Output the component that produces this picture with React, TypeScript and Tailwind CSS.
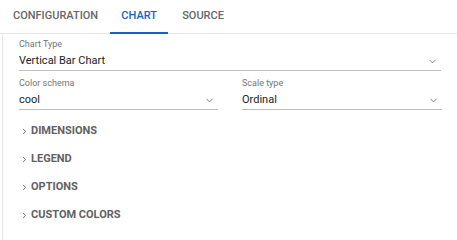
import { ChevronDown, ChevronRight } from "lucide-react"

const FONT = { fontFamily: "Roboto, 'Liberation Sans', sans-serif" }

function SelectField({ label, value, className }: { label: string; value: string; className?: string }) {
  return (
    <div className={className}>
      <div className="text-[9px] leading-[11px] text-[#757575]">{label}</div>
      <div className="flex items-center justify-between h-[21px] pt-[3px] border-b border-[#bdbdbd]">
        <span className="text-[11px] text-[#212121]">{value}</span>
        <ChevronDown className="w-[11px] h-[11px] text-[#777] mr-[3px]" strokeWidth={2} />
      </div>
    </div>
  )
}

const sections = ["DIMENSIONS", "LEGEND", "OPTIONS", "CUSTOM COLORS"]

export default function App() {
  return (
    <div className="w-[457px] h-[240px] bg-white overflow-hidden" style={FONT}>
      {/* Tabs */}
      <div className="flex h-[34px] border-b border-[#e6e6e6] pl-[2px]">
        <div className="px-[11px] flex items-center text-[11px] font-medium text-[#666]">CONFIGURATION</div>
        <div className="ml-[1px] w-[58px] flex items-center justify-center text-[11px] font-medium text-[#1565c0] border-b-2 border-[#1565c0] mb-[-1px]">
          CHART
        </div>
        <div className="ml-[14px] flex items-center text-[11px] font-medium text-[#666]">SOURCE</div>
      </div>

      <div className="ml-[2px] border-l border-[#e6e6e6] h-[206px] pl-[16px] pr-[15px] pt-[5px]">
        <SelectField label="Chart Type" value="Vertical Bar Chart" className="w-[422px]" />
        <div className="flex gap-[24px] mt-[7px]">
          <SelectField label="Color schema" value="cool" className="w-[199px]" />
          <SelectField label="Scale type" value="Ordinal" className="w-[200px]" />
        </div>

        <div className="mt-[13px] flex flex-col gap-[12px]">
          {sections.map((s) => (
            <div key={s} className="flex items-center h-[16px]">
              <ChevronRight className="w-[9px] h-[9px] text-[#666] ml-[1px] mr-[2px]" strokeWidth={2.5} />
              <span className="text-[11px] font-bold text-[#616161]">{s}</span>
            </div>
          ))}
        </div>
      </div>
    </div>
  )
}
